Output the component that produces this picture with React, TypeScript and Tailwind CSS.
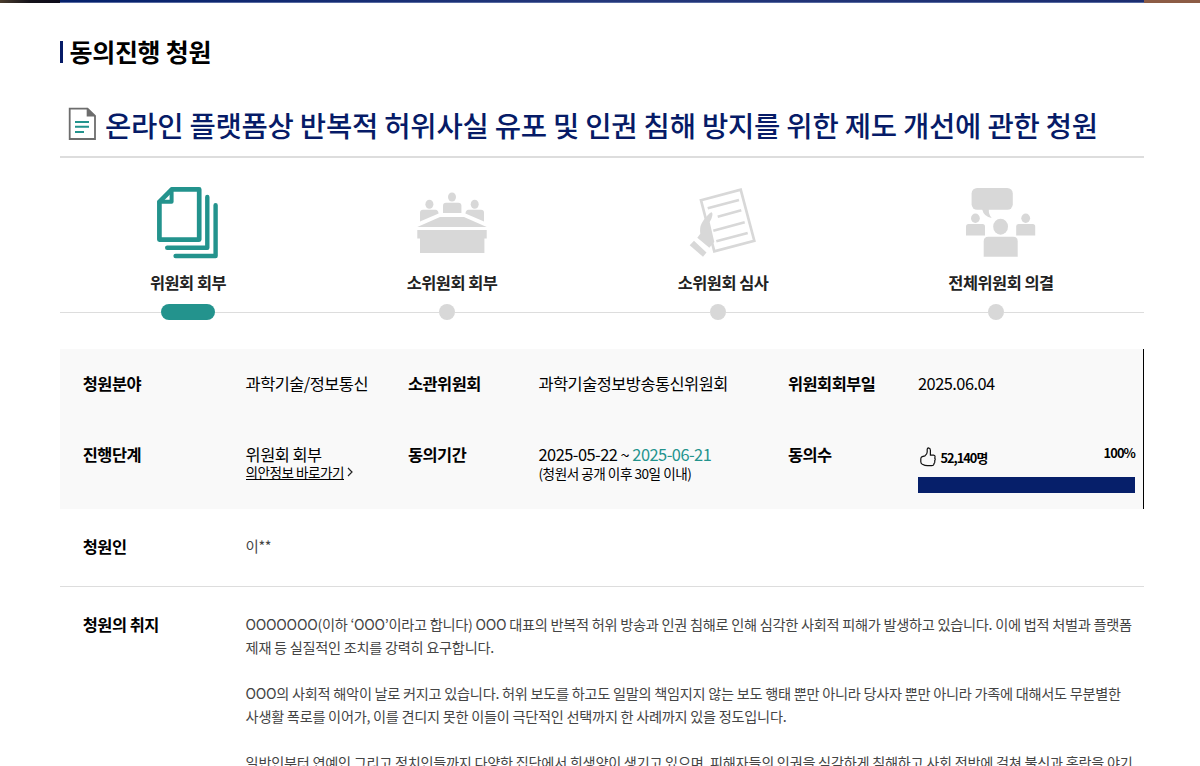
import type { ReactNode } from "react";

function CommitteeReferralIcon() {
  return (
    <svg width="72" height="76" viewBox="0 0 72 76" fill="none" stroke="#23938d" strokeWidth="4.7" strokeLinecap="round" strokeLinejoin="round">
      <path d="M19.8 4.4H47.2V54.6H7.4V16.8Z" />
      <path d="M7.4 16.8H19.6V4.4" strokeWidth="4" />
      <path d="M55.3 11.9V62.7H15.2" strokeWidth="4.4" />
      <path d="M63.6 20.2V71H23.6" strokeWidth="4.4" />
    </svg>
  );
}

function SubcommitteeReferralIcon() {
  return (
    <svg width="72" height="76" viewBox="0 0 72 76" fill="#d8d8d8">
      <ellipse cx="36" cy="12" rx="4" ry="4.5" />
      <ellipse cx="13.4" cy="19.2" rx="4" ry="4.5" />
      <ellipse cx="58.7" cy="19.2" rx="4" ry="4.5" />
      <path d="M27 28V20.7q0-3 3-3h12.4q3 0 3 3V28Z" />
      <path d="M4 36.4V27.8q0-3 3-3h12.6q2.4 0 3 3.6Z" />
      <path d="M68 36.4V27.8q0-3-3-3H52.4q-2.4 0-3 3.6Z" />
      <path d="M1.3 42 24 32h24l22.7 10Z" />
      <path d="M1.3 45h69.4v8.5H68.4V68H4V53.5H1.3Z" />
    </svg>
  );
}

function SubcommitteeReviewIcon() {
  return (
    <svg width="72" height="76" viewBox="0 0 72 76" fill="none" stroke="#d8d8d8" strokeWidth="2.7">
      <path d="M14 15.3 53.7 4.7 67.3 55.7 27.3 66.4Z" />
      <path d="M20.7 23.3 52 15M30.7 31.7 54.3 25.3M26.3 45.7 57.7 37.3M29.3 56.3 60.7 48" strokeWidth="2.6" />
      <path d="M24.2 27.3q1.700.4 1.100 3.400-.5 3-2.600 6.300l4.600 20-5 5.700L10.300 52.700l3-3.900q-.9-6.200 1.400-10.600 1.400-2.800 5.300-7.200 2.700-3.200 4.200-3.700Z" fill="#d8d8d8" stroke="none" />
      <path d="M7 55.7 19.5 67.5 16 71.8 2.7 60.3Z" fill="#d8d8d8" stroke="none" />
    </svg>
  );
}

function PlenaryVoteIcon() {
  return (
    <svg width="72" height="76" viewBox="0 0 72 76" fill="#d8d8d8">
      <rect x="6.6" y="3" width="41.2" height="21.8" rx="5.5" />
      <path d="M17 24q2 8 9.7 9-3.2-3.5-2.9-9Z" />
      <ellipse cx="10.4" cy="33.3" rx="4.4" ry="4.7" />
      <ellipse cx="60.7" cy="33.3" rx="4.4" ry="4.7" />
      <ellipse cx="35.6" cy="41.7" rx="7.4" ry="8" />
      <path d="M1 50.4V41.5q0-2.5 2.5-2.5h14q2.5 0 2.5 2.5v8.9Z" />
      <path d="M51.2 50.4V41.5q0-2.5 2.5-2.5h14q2.5 0 2.5 2.5v8.9Z" />
      <path d="M18.7 71.7V56.2q0-4.5 4.5-4.5h25q4.5 0 4.5 4.5v15.5Z" />
    </svg>
  );
}

function DocumentIcon() {
  return (
    <svg width="28" height="34" viewBox="0 0 28 34" fill="none">
      <path d="M1.7 1.6H19.5L27 9V32H1.7Z" stroke="#6d6d6d" strokeWidth="1.8" />
      <path d="M18.7.8 27.8 9.5H18.7Z" fill="#6d6d6d" />
      <path d="M7 15h14M7 19.8h14M7 25h9" stroke="#23938d" strokeWidth="1.9" />
    </svg>
  );
}

function ThumbIcon() {
  return (
    <svg width="16" height="20" viewBox="0 0 16 20" fill="none" stroke="#111" strokeWidth="1.2" strokeLinejoin="round">
      <path d="M5 8.8Q7.2 7 7.2 5V2.2Q7.3.8 8.5.8q1.9.2 1.9 2.4V8.200h3.200q1.500.2 1.500 1.500 0 .7-.4 1.300.6.700.5 1.500-.1.900-.6 1.400.4.700.1 1.500-.3.700-.7 1 .1 1.200-.6 1.700-.5.600-1.900.6H7.500Q5 18.700 2.300 17.200.8 16.300.8 14.700V11.700Q.9 10.200 2.200 9.600Z" />
    </svg>
  );
}

const steps: { label: string; icon: ReactNode; active?: boolean }[] = [
  { label: "위원회 회부", icon: <CommitteeReferralIcon />, active: true },
  { label: "소위원회 회부", icon: <SubcommitteeReferralIcon /> },
  { label: "소위원회 심사", icon: <SubcommitteeReviewIcon /> },
  { label: "전체위원회 의결", icon: <PlenaryVoteIcon /> }
];

const purpose = [
  ["OOOOOOO(이하 ‘OOO’이라고 합니다) OOO 대표의 반복적 허위 방송과 인권 침해로 인해 심각한 사회적 피해가 발생하고 있습니다. 이에 법적 처벌과 플랫폼", "제재 등 실질적인 조치를 강력히 요구합니다."],
  ["OOO의 사회적 해악이 날로 커지고 있습니다. 허위 보도를 하고도 일말의 책임지지 않는 보도 행태 뿐만 아니라 당사자 뿐만 아니라 가족에 대해서도 무분별한", "사생활 폭로를 이어가, 이를 견디지 못한 이들이 극단적인 선택까지 한 사례까지 있을 정도입니다."],
  ["일반인부터 연예인 그리고 정치인들까지 다양한 집단에서 희생양이 생기고 있으며, 피해자들의 인권을 심각하게 침해하고 사회 전반에 걸쳐 불신과 혼란을 야기"]
];

export default function App() {
  return (
    <div className="h-[766px] overflow-hidden bg-white font-['Noto_Sans_CJK_KR',sans-serif] text-black whitespace-nowrap">
      <div className="flex h-[3px]">
        <div className="w-[60px] bg-linear-to-r from-[#4b3d2d] via-[#15121a] to-[#0c0b1a]" />
        <div className="flex-1 border-b border-[#5568a0] bg-linear-to-r from-[#04206b] via-[#24377a] to-[#1b2d70]" />
        <div className="w-[56px] bg-[#8c5c45]" />
      </div>

      <main className="ml-[60px] w-[1084px]">
        <h1 className="flex h-[96px] items-center gap-[7px] text-[25px] leading-[36px] font-bold tracking-[-0.3px]">
          <span className="mt-[2px] h-[22px] w-[2.5px] bg-[#061b67]" />
          동의진행 청원
        </h1>

        <div className="flex h-[59px] items-start border-b-2 border-[#ddd] pt-[8px] pl-2">
          <DocumentIcon />
          <h2 className="ml-[9px] text-[28.6px] leading-[36px] font-medium tracking-[-0.24px] text-[#061b67]">온라인 플랫폼상 반복적 허위사실 유포 및 인권 침해 방지를 위한 제도 개선에 관한 청원</h2>
        </div>

        <section className="pt-[27px]">
          <ol className="grid grid-cols-[256px_272px_270px_286px]">
            {steps.map((step) => (
              <li key={step.label} className="flex flex-col items-center">
                {step.icon}
                <p className="mt-[9px] text-[16.4px] leading-6 font-bold tracking-[-0.5px] text-[#222]">{step.label}</p>
                <div className="mt-[10px] flex h-4 w-full items-center">
                  <span className="h-px flex-1 bg-[#ddd]" />
                  {step.active ? <span className="h-4 w-[54px] rounded-full bg-[#23938d]" /> : <span className="size-4 rounded-full bg-[#d8d8d8]" />}
                  {step.active ? <span className="h-px flex-1 bg-[#ddd]" /> : <span className="h-px w-[calc(50%-3px)] bg-[#ddd]" />}
                </div>
              </li>
            ))}
          </ol>
        </section>

        <dl className="mt-[29px] grid h-[160px] grid-cols-[162.8px_162.4px_130.5px_249.5px_130px_217px] grid-rows-[71px_67px] border-r border-black bg-[#f9f9f9] pt-[22px] pl-[22.8px] text-[16.4px] leading-6 tracking-[-0.52px]">
          <dt className="font-bold">청원분야</dt>
          <dd>과학기술/정보통신</dd>
          <dt className="font-bold">소관위원회</dt>
          <dd>과학기술정보방송통신위원회</dd>
          <dt className="font-bold">위원회회부일</dt>
          <dd>2025.06.04</dd>
          <dt className="font-bold">진행단계</dt>
          <dd>
            <p className="leading-6">위원회 회부</p>
            <a className="-mt-px flex h-[14px] items-center text-[13.6px] leading-[14px] tracking-[-0.52px]">
              <span className="border-b border-black">의안정보 바로가기</span>
              <svg width="7" height="10" viewBox="0 0 7 10" fill="none" stroke="#222" strokeWidth="1.2" className="ml-[3px]">
                <path d="M1 1l4 4-4 4" />
              </svg>
            </a>
          </dd>
          <dt className="font-bold">동의기간</dt>
          <dd>
            <p className="leading-6">
              2025-05-22 ~ <span className="text-[#23938d]">2025-06-21</span>
            </p>
            <p className="text-[13.6px] leading-[14px] tracking-[-0.48px]">(청원서 공개 이후 30일 이내)</p>
          </dd>
          <dt className="font-bold">동의수</dt>
          <dd>
            <div className="flex h-[34.5px] items-start justify-between text-[12.8px] font-bold">
              <span className="flex items-center gap-1 pt-[2px] pl-[2.5px] tracking-[-1px]">
                <ThumbIcon />
                <span className="mt-[2px]">52,140명</span>
              </span>
              <span className="-mt-px tracking-[-0.9px]">100%</span>
            </div>
            <div className="h-4 bg-[#061f6a]" />
          </dd>
        </dl>

        <div className="grid h-[78px] grid-cols-[162.8px_1fr] border-b border-[#ddd] pt-[25px] pl-[22.8px]">
          <h3 className="text-[16.4px] leading-6 font-bold tracking-[-0.52px]">청원인</h3>
          <p className="text-[14.4px] leading-6 tracking-[-0.4px] text-[#444]">이**</p>
        </div>

        <div className="grid grid-cols-[162.8px_1fr] pt-[25px] pl-[22.8px]">
          <h3 className="text-[16.4px] leading-6 font-bold tracking-[-0.52px]">청원의 취지</h3>
          <div className="flex flex-col gap-[23.04px] pt-px text-[14.2px] leading-[23.04px] tracking-[-0.27px] text-[#444]">
            {purpose.map((lines) => (
              <div key={lines[0]}>
                {lines.map((line) => (
                  <p key={line}>{line}</p>
                ))}
              </div>
            ))}
          </div>
        </div>
      </main>
    </div>
  );
}
